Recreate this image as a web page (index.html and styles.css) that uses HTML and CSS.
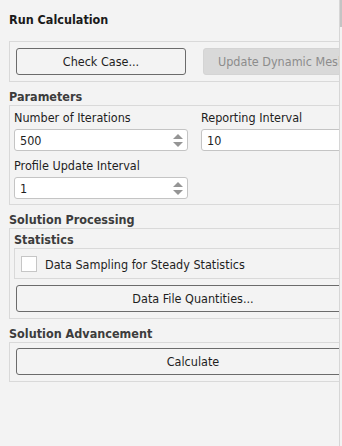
FILE: index.html
```html
<!DOCTYPE html>
<html>
<head>
    <title>Run Calculation</title>
    <link rel="stylesheet" href="styles.css">
</head>
<body>
<div class="panel">
    <div class="content">
        <div class="inner">
            <h1 class="title">Run Calculation</h1>
            <div class="box top-buttons">
                <button class="btn check">Check Case...</button>
                <button class="btn" disabled>Update Dynamic Mesh...</button>
            </div>

            <h2 class="section">Parameters</h2>
            <div class="box params">
                <div class="field">
                    <label>Number of Iterations</label>
                    <div class="input spin"><span>500</span><i class="arrows"><b class="up"></b><b class="down"></b></i></div>
                </div>
                <div class="field">
                    <label>Reporting Interval</label>
                    <div class="input"><span>10</span></div>
                </div>
                <div class="field">
                    <label>Profile Update Interval</label>
                    <div class="input spin"><span>1</span><i class="arrows"><b class="up"></b><b class="down"></b></i></div>
                </div>
            </div>

            <h2 class="section">Solution Processing</h2>
            <div class="box processing">
                <h3 class="sub">Statistics</h3>
                <div class="box stats">
                    <label class="check-row"><span class="checkbox"></span>Data Sampling for Steady Statistics</label>
                </div>
                <button class="btn wide">Data File Quantities...</button>
            </div>

            <h2 class="section">Solution Advancement</h2>
            <div class="box advance">
                <button class="btn wide">Calculate</button>
            </div>
        </div>
    </div>
    <div class="scrollbar"><div class="thumb"></div></div>
</div>
</body>
</html>
```

FILE: styles.css
```css
* {
    margin: 0;
    padding: 0;
    box-sizing: border-box;
}

body {
    background: #f3f3f3;
    font-family: "DejaVu Sans Condensed", "DejaVu Sans", sans-serif;
    font-size: 12.5px;
    color: #1e1e1e;
}

.panel {
    display: flex;
    height: 446px;
}

.content {
    flex: 1;
    overflow: hidden;
}

.inner {
    width: 390px;
    padding-left: 9px;
}

.title {
    font-size: 12.5px;
    font-weight: bold;
    line-height: 16px;
    padding-top: 12px;
    color: #1a1a1a;
}

.section {
    font-size: 12.5px;
    font-weight: bold;
    line-height: 16px;
    margin-top: 7px;
    color: #3c3c3c;
}

.sub {
    font-size: 12.5px;
    font-weight: bold;
    line-height: 16px;
    padding-top: 3px;
    color: #3c3c3c;
}

.box {
    width: 369px;
    border: 1px solid #d9d9d9;
}

.title + .box {
    margin-top: 13px;
}

.top-buttons {
    padding: 6px;
    display: flex;
    gap: 17px;
}

.btn {
    height: 27px;
    border: 1px solid #6b6b6b;
    border-radius: 3px;
    background: #f3f3f3;
    font-family: inherit;
    font-size: 12.5px;
    color: #1e1e1e;
}

.btn.check {
    width: 170px;
}

.btn[disabled] {
    flex: 1;
    background: #d9d9d9;
    border-color: #d4d4d4;
    color: #8c8c8c;
    text-align: left;
    padding-left: 14px;
}

.btn.wide {
    display: block;
    width: 354px;
}

.params {
    padding: 4px 4px 5px;
    display: grid;
    grid-template-columns: 174px 1fr;
    column-gap: 13px;
    row-gap: 7px;
}

.field label {
    display: block;
    line-height: 16px;
    margin-bottom: 3px;
}

.input {
    height: 22px;
    background: #ffffff;
    border: 1px solid #c4c4c4;
    border-radius: 3px;
    display: flex;
    align-items: center;
    padding-left: 5px;
}

.input span {
    flex: 1;
}

.arrows {
    display: flex;
    flex-direction: column;
    gap: 3px;
    padding-right: 4px;
}

.arrows b {
    width: 0;
    height: 0;
    border-left: 5px solid transparent;
    border-right: 5px solid transparent;
}

.arrows .up {
    border-bottom: 5px solid #959595;
}

.arrows .down {
    border-top: 5px solid #959595;
}

.processing {
    padding: 0 0 6px 4px;
}

.stats {
    width: 364px;
    padding: 4px 6px 3px;
}

.check-row {
    display: flex;
    align-items: center;
    gap: 8px;
    height: 22px;
}

.checkbox {
    width: 16px;
    height: 16px;
    background: #ffffff;
    border: 1px solid #c6c6c6;
}

.processing .btn.wide {
    margin: 6px 0 0 2px;
}

.advance {
    padding: 5px 6px 6px;
}

.scrollbar {
    width: 3px;
    border-left: 1px solid #d6d6d6;
    background: #f3f3f3;
}

.thumb {
    height: 27px;
    background: #c4c4c4;
}
```
